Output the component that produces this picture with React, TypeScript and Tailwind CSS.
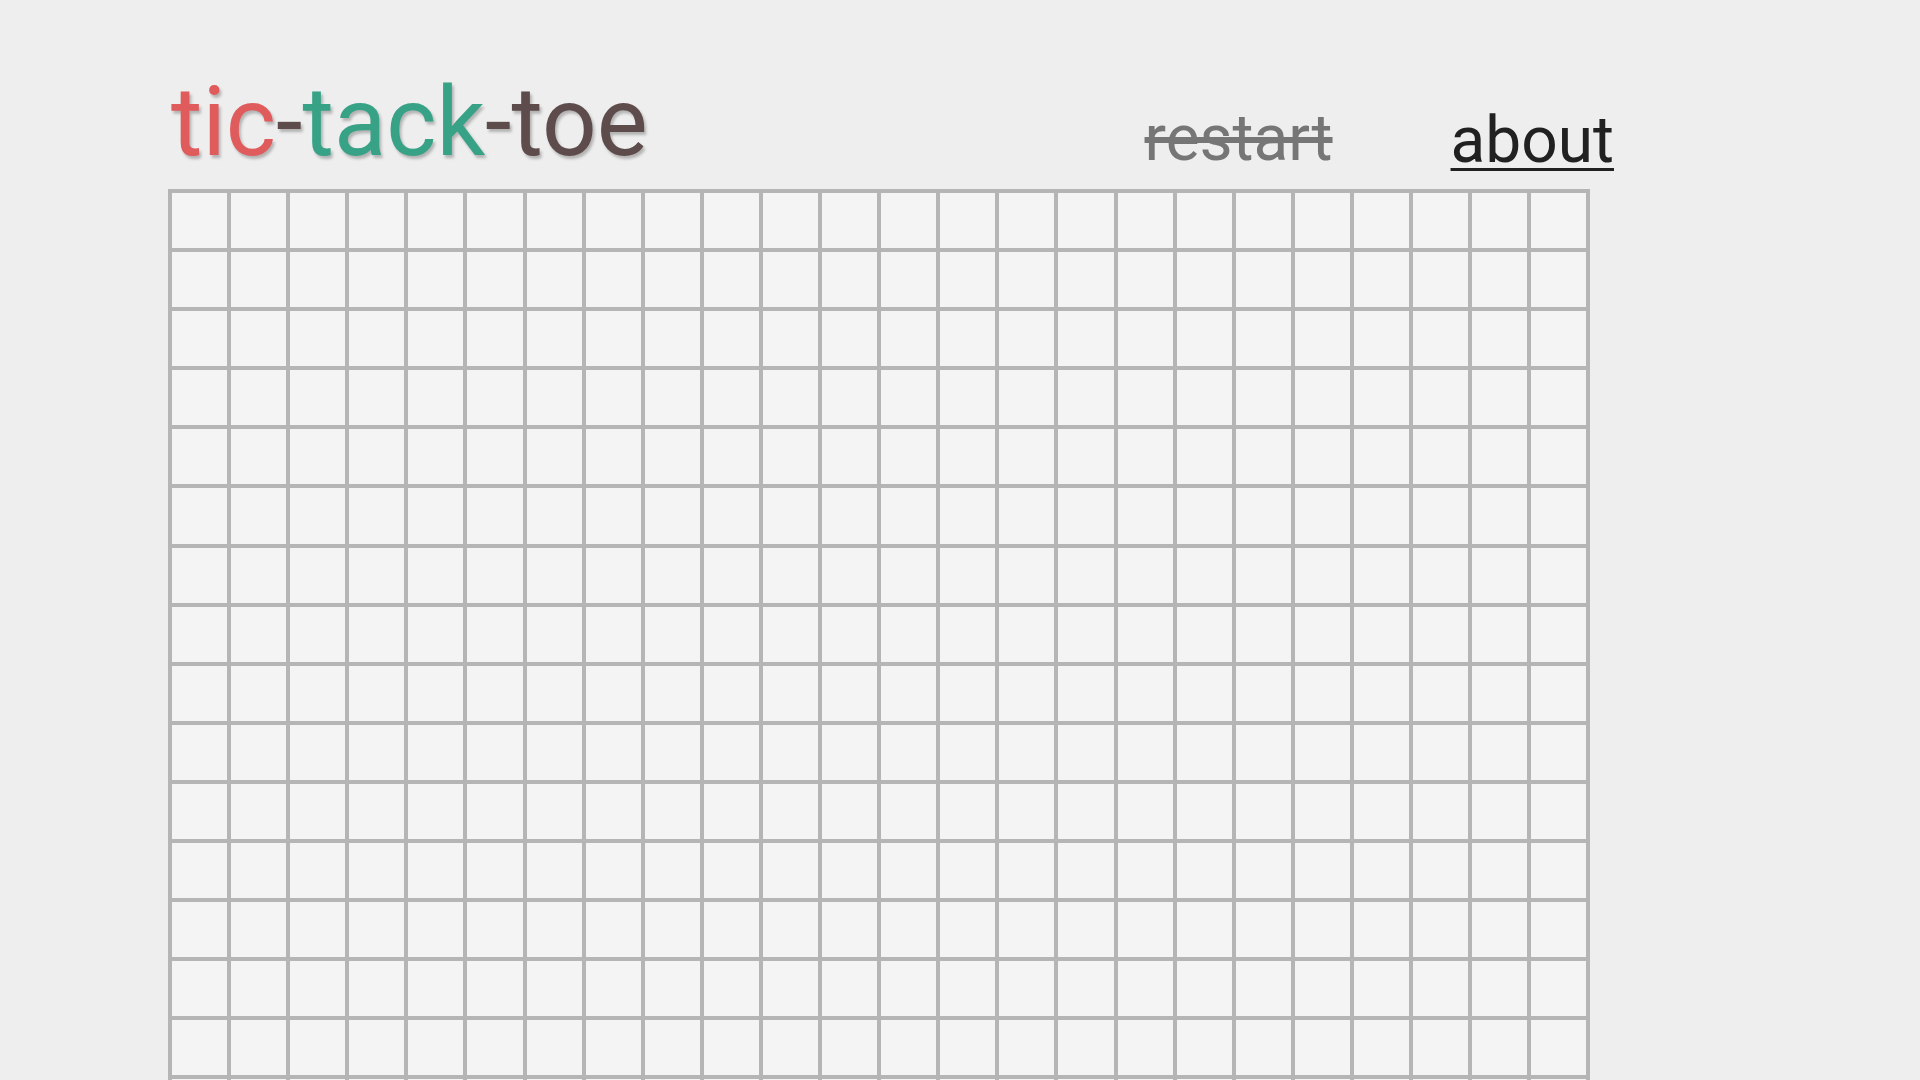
import React from "react";

const COLS = 24;
const ROWS = 24;

const Title = () => (
  <h1 className="text-[96px] leading-none font-normal [text-shadow:2px_3px_3px_rgba(0,0,0,0.25)]">
    <span className="text-[#e05c5c]">tic</span>
    <span className="text-[#5e4b4b]">-</span>
    <span className="text-[#38a286]">tack</span>
    <span className="text-[#5e4b4b]">-toe</span>
  </h1>
);

const Board = () => (
  <div className="grid w-[1422px] grid-cols-[repeat(24,1fr)] gap-1 bg-[#b5b5b5] p-1">
    {Array.from({ length: ROWS * COLS }).map((_, i) => (
      <div key={i} className="aspect-square bg-[#f4f4f4]" />
    ))}
  </div>
);

export default function App() {
  return (
    <div className="min-h-screen bg-[#eeeeee] font-['Roboto',sans-serif]">
      <div className="pl-[168px]">
        <header className="flex w-[1446px] items-start justify-between">
          <div className="mt-[74px] ml-[3px]">
            <Title />
          </div>
          <nav className="flex items-start gap-[118px] text-[64px] leading-none">
            <a className="mt-[107px] text-[#767676] line-through">restart</a>
            <a className="mt-[109px] text-[#212121] underline decoration-[3px] underline-offset-[6px]">
              about
            </a>
          </nav>
        </header>
        <div className="mt-[16px]">
          <Board />
        </div>
      </div>
    </div>
  );
}
